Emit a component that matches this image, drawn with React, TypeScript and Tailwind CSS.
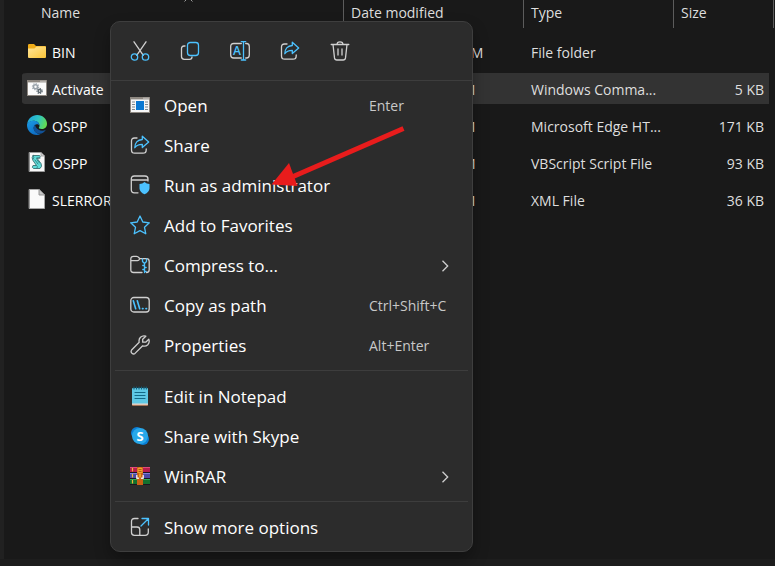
import type { ReactNode } from 'react';

const GREY = '#d0d0d0';
const BLUE = '#4cc2ff';

function Icon({ children }: { children: ReactNode }) {
  return (
    <svg width="20" height="20" viewBox="0 0 20 20" fill="none" strokeWidth="1.3" strokeLinecap="round" strokeLinejoin="round" className="block shrink-0" aria-hidden="true">
      {children}
    </svg>
  );
}

/* ---------- file icons ---------- */

const FolderIcon = () => (
  <Icon>
    <path d="M1 4.2Q1 3 2.200 3H7L9 5H18Q19 5 19 6V9H1Z" fill="#f0ac18" />
    <path d="M1 7.500H7.500L9.500 5.500H18Q19 5.500 19 6.500V16Q19 17 18 17H2Q1 17 1 16Z" fill="url(#folderFill)" />
    <defs>
      <linearGradient id="folderFill" x1="0" y1="0" x2="1" y2="1">
        <stop offset="0" stopColor="#ffe59a" />
        <stop offset="1" stopColor="#fbc537" />
      </linearGradient>
    </defs>
  </Icon>
);

const Gear = ({ x, y, r, color }: { x: number; y: number; r: number; color: string }) => (
  <g stroke={color}>
    <circle cx={x} cy={y} r={r} strokeWidth="1.5" />
    <circle cx={x} cy={y} r={r + 1.1} strokeWidth="1.1" strokeLinecap="butt" strokeDasharray="1.2 1.2" />
  </g>
);

const BatchIcon = () => (
  <Icon>
    <rect x="0.500" y="2.500" width="19" height="15" fill="#fbfbfb" stroke="#8d8780" strokeWidth="1" strokeLinejoin="miter" />
    <path d="M0 3.200H20" stroke="#8d8780" strokeWidth="2.400" strokeLinecap="butt" />
    <path d="M13.500 3.200h1M15.500 3.200h1M17.500 3.200h1" stroke="#fff" strokeWidth="1" strokeLinecap="butt" />
    <Gear x={8.5} y={8.7} r={2} color="#9aa3aa" />
    <Gear x={12.6} y={13} r={1.5} color="#5d6970" />
  </Icon>
);

const EdgeIcon = () => (
  <Icon>
    <defs>
      <linearGradient id="edgeTop" x1="0" y1="0.3" x2="1" y2="0.6">
        <stop offset="0" stopColor="#1fa4dd" />
        <stop offset="0.5" stopColor="#2fc5c4" />
        <stop offset="1" stopColor="#66dd4b" />
      </linearGradient>
      <linearGradient id="edgeSide" x1="0" y1="0" x2="0.6" y2="1">
        <stop offset="0" stopColor="#1b9be4" />
        <stop offset="1" stopColor="#0d6cc4" />
      </linearGradient>
    </defs>
    <path d="M0.200 9C1 3.500 5 0 10.200 0C16 0 20 4.300 20 8.700C20 12 17.600 14 14.700 14C12.500 14 11.500 13.200 11.900 12.500C13.300 10.900 12.500 6.500 8 5.900C4.500 5.500 1.500 7 0.200 9Z" fill="url(#edgeTop)" />
    <path d="M0 10C0.200 7.200 3.500 5.600 7 5.800C10.600 6 12.600 8.500 12.300 10.500C11.500 8.500 7 8.500 6.700 12.500C6.500 16 9.500 19 13.500 18.900C12.300 19.600 11.100 20 9.800 20C4.200 20 0 15.600 0 10Z" fill="url(#edgeSide)" />
    <path d="M8 9.400C6 11.100 6 15.500 9.300 17.700C12.500 19.800 16.400 18.800 18.900 14.800C16.500 16 13.500 16 11.300 14.400C9.300 13 8.200 11.200 8 9.400Z" fill="#115297" />
  </Icon>
);

const ScriptIcon = () => (
  <Icon>
    <path d="M2.500 0.500H14L17.500 4V19.500H2.500Z" fill="#f8f8f8" stroke="#9a9a9a" strokeWidth="1" />
    <path d="M14 0.500V4H17.500" fill="#cfcfcf" stroke="#9a9a9a" strokeWidth="0.800" />
    <path d="M6.200 3.500H12.500Q14 4.500 12.500 6H9.800L14 11.500Q15.500 14.500 13 16.500H6.500Q4.500 15.500 6 13.500H9.500L6 8.500Q4 5.500 6.200 3.500Z" fill="#5fdcd8" stroke="#3a6f72" strokeWidth="0.900" />
    <path d="M6 3.800Q7.800 5 6.500 6.800M9.500 6.200H13M9.500 13.500Q11.500 14.500 10 16.200M8 8L11 12M10 7.800L12.500 11" stroke="#2f7478" strokeWidth="0.800" />
  </Icon>
);

const PageIcon = () => (
  <Icon>
    <path d="M2.500 0.500H12L17.500 6V19.500H2.500Z" fill="#fafafa" stroke="#a6a6a6" strokeWidth="1" />
    <path d="M12 0.500V6H17.500Z" fill="#c9c9c9" stroke="#8f8f8f" strokeWidth="0.900" />
  </Icon>
);

/* ---------- menu icons ---------- */

const CutIcon = () => (
  <Icon>
    <path d="M4 0.800L13.300 14.300M16 0.800L6.700 14.300" stroke={GREY} />
    <circle cx="4.500" cy="16" r="3.200" stroke={BLUE} />
    <circle cx="15.500" cy="16" r="3.200" stroke={BLUE} />
  </Icon>
);

const CopyIcon = () => (
  <Icon>
    <path d="M5 5H4Q1.500 5 1.500 7.500V15.500Q1.500 18.300 4.300 18.300H9.500Q12 18.300 12 16" stroke={GREY} />
    <rect x="7.500" y="1.500" width="11" height="13" rx="2.800" stroke={BLUE} />
  </Icon>
);

const RenameIcon = () => (
  <Icon>
    <path d="M11.300 2.500H3.700Q0.700 2.500 0.700 5.500V14Q0.700 17 3.700 17H11.300M15.700 2.500H16.500Q19.300 2.500 19.300 5.500V14Q19.300 17 16.500 17H15.700" stroke={GREY} />
    <path d="M11.300 0.700H15.700M11.300 19H15.700M13.500 0.700V19" stroke={BLUE} />
    <text x="7" y="14" textAnchor="middle" fill={BLUE} className="font-['Open_Sans',sans-serif] text-[12px] font-semibold">A</text>
  </Icon>
);

const ShareIcon = () => (
  <Icon>
    <path d="M7 3H4.500Q1.500 3 1.500 6V15Q1.500 18.200 4.700 18.200H13Q16.200 18.200 16.200 15V14" stroke={GREY} />
    <path d="M12.300 1.200L18.700 7L12.300 12.500V9.300C9 9.300 6.500 10 4.800 12.700C4.800 8.200 7.500 4.800 12.300 4.500Z" stroke={BLUE} />
  </Icon>
);

const DeleteIcon = () => (
  <Icon>
    <path d="M1.200 3.500H18.800M7 3.500Q7 0.800 10 0.800Q13 0.800 13 3.500M3 3.500L4.500 16.900Q4.800 19 6.900 19H13.100Q15.200 19 15.500 16.900L17 3.500M8 8V14M12 8V14" stroke={GREY} />
  </Icon>
);

const OpenIcon = () => (
  <Icon>
    <rect x="0.500" y="2.500" width="19" height="15" fill="#f6f6f6" stroke="#8d8780" strokeWidth="1" strokeLinejoin="miter" />
    <path d="M0 3.200H20" stroke="#8d8780" strokeWidth="2.400" strokeLinecap="butt" />
    <path d="M13.500 3.200h1M15.500 3.200h1M17.500 3.200h1" stroke="#fff" strokeWidth="1" strokeLinecap="butt" />
    <path d="M2 7H5M2 9.500H5M2 12H5M2 14.500H5M15 7H18M15 9.500H18M15 12H18M15 14.500H18" stroke="#7e878d" strokeWidth="1" strokeLinecap="butt" />
    <rect x="6" y="6" width="8" height="9" fill="#0a78d2" />
  </Icon>
);

const AdminIcon = () => (
  <Icon>
    <path d="M8 17.800H4.300Q1.300 17.800 1.300 14.800V4Q1.300 1 4.300 1H15Q18 1 18 4V6M1.300 5H18" stroke={GREY} />
    <path d="M14.500 7Q16.500 8.800 19.500 9V13.500Q19.200 17.300 14.500 19.300Q9.800 17.300 9.500 13.500V9Q12.500 8.800 14.500 7Z" fill={BLUE} />
  </Icon>
);

const StarIcon = () => (
  <Icon>
    <path d="M10 1L12.800 7L19.300 7.800L14.500 12.300L15.800 18.800L10 15.600L4.200 18.800L5.500 12.300L0.700 7.800L7.200 7Z" stroke={BLUE} />
  </Icon>
);

const CompressIcon = () => (
  <Icon>
    <path d="M12 17.500H3.500Q0.800 17.500 0.800 14.800V4Q0.800 1.300 3.500 1.300H6.500Q8 1.300 9 2.800L9.800 3.700H16.500Q19.200 3.700 19.200 6.500V14.800Q19.200 17.500 16.500 17.500M0.800 5.700H7.500Q8.800 5.700 9.800 3.700" stroke={GREY} />
    <path d="M12.500 4V6.500L14.500 8.500L16.500 6.500V4M14.500 8.500V17.500M14.500 10.500H12.800M14.500 12.500H16.200M14.500 14.500H12.800M14.500 16.500H16.200" stroke={BLUE} />
  </Icon>
);

const PathIcon = () => (
  <Icon>
    <rect x="0.800" y="2.500" width="18.400" height="14.500" rx="3" stroke={GREY} />
    <path d="M3.300 5.800L5.700 13.700M7.300 5.800L9.700 13.700" stroke={BLUE} strokeWidth="1.600" />
    <path d="M12.500 13.600H13M16 13.600H16.500" stroke={BLUE} strokeWidth="1.700" />
  </Icon>
);

const WrenchIcon = () => (
  <Icon>
    <path d="M15.800 1.200L12.700 4.300V7.200H15.700L18.800 4.200Q20 7.300 17.800 9.700Q15.600 11.700 12.700 10.800L5 18.400Q3.600 19.600 2 18.300Q0.400 16.700 1.600 15L9.200 7.300Q8.500 4.300 10.500 2.300Q12.800 0.200 15.800 1.200Z" stroke={GREY} />
  </Icon>
);

const NotepadIcon = () => (
  <Icon>
    <rect x="2" y="2" width="16" height="17" rx="1" fill="#5ec8e5" />
    <path d="M2 17.500H18V18.500Q18 19.500 17 19.500H3Q2 19.500 2 18.500Z" fill="#e6d9cf" />
    <path d="M2 19.300H18" stroke="#b9683a" strokeWidth="0.700" strokeLinecap="butt" />
    <path d="M4 1V3M6.500 1V3M9 1V3M11.500 1V3M14 1V3M16.300 1V3" stroke="#12607c" strokeWidth="1.200" />
    <path d="M5 6.500H15M5 9.500H15M5 12.500H15" stroke="#136a88" strokeWidth="1.200" />
  </Icon>
);

const SkypeIcon = () => (
  <Icon>
    <circle cx="7" cy="7" r="6" fill="#0a7fd6" />
    <circle cx="13" cy="13" r="6" fill="#0a7fd6" />
    <circle cx="10" cy="10" r="8" fill="#28a8ea" />
    <text x="10" y="14.500" textAnchor="middle" fill="#fff" className="font-['Open_Sans',sans-serif] text-[13px] font-bold">S</text>
  </Icon>
);

const WinrarIcon = () => (
  <Icon>
    <rect x="0" y="1" width="20" height="6" fill="#b51d4c" />
    <path d="M0 1.500H20" stroke="#e04a7a" strokeWidth="1" strokeLinecap="butt" />
    <rect x="0" y="7" width="20" height="6" fill="#4a4aa6" />
    <path d="M0 7.500H20" stroke="#8080d8" strokeWidth="1" strokeLinecap="butt" />
    <rect x="0" y="13" width="20" height="6" fill="#12702e" />
    <path d="M0 13.500H20" stroke="#35a853" strokeWidth="1" strokeLinecap="butt" />
    <path d="M0 6.500H20M0 12.500H20M0 18.500H20" stroke="#1c1420" strokeWidth="1" strokeLinecap="butt" />
    <path d="M2.500 2V5.500M2.500 8V11.500M2.500 14V17.500" stroke="#f0b63a" strokeWidth="1.200" strokeLinecap="butt" />
    <rect x="7" y="1" width="6" height="18" fill="#c85f14" />
    <path d="M7.500 2.500Q10 0.500 12.500 2.500V7H7.500Z" fill="#f0a02c" />
    <path d="M8.500 3.500H11.500M8.500 5.500H11.500" stroke="#a65310" strokeWidth="0.900" strokeLinecap="butt" />
    <path d="M6.800 9.500V12.300H8.500M13.200 9.500V12.300H11.500" stroke="#f1eee9" strokeWidth="1.400" />
    <rect x="9" y="7.500" width="2" height="4" fill="#e8a02a" />
  </Icon>
);

const MoreIcon = () => (
  <Icon>
    <path d="M8 1.500H4.500Q1.500 1.500 1.500 4.500V15.500Q1.500 18.300 4.300 18.300H15Q18.300 18.300 18.300 15.300V12M1.500 10H7Q9.800 10 9.800 12.800V18.300" stroke={GREY} />
    <path d="M11 9L18.300 1.700M12 1.500H18.500V8" stroke={BLUE} />
  </Icon>
);

const Chevron = () => (
  <svg width="8" height="12" viewBox="0 0 8 12" fill="none" className="block" aria-hidden="true">
    <path d="M1.500 0.800L6.700 6L1.500 11.200" stroke="#cfcfcf" strokeWidth="1.300" />
  </svg>
);

/* ---------- data ---------- */

type FileRow = { name: string; date: string; type: string; size: string; icon: ReactNode; selected?: boolean };

const files: FileRow[] = [
  { name: 'BIN', date: '3/14/2023 10:31 PM', type: 'File folder', size: '', icon: <FolderIcon /> },
  { name: 'Activate', date: '3/14/2023 9:26 PM', type: 'Windows Comma...', size: '5 KB', icon: <BatchIcon />, selected: true },
  { name: 'OSPP', date: '3/14/2023 9:26 PM', type: 'Microsoft Edge HT...', size: '171 KB', icon: <EdgeIcon /> },
  { name: 'OSPP', date: '3/14/2023 9:26 AM', type: 'VBScript Script File', size: '93 KB', icon: <ScriptIcon /> },
  { name: 'SLERROR', date: '3/14/2023 9:26 PM', type: 'XML File', size: '36 KB', icon: <PageIcon /> },
];

const actions = [
  { label: 'Cut', icon: <CutIcon /> },
  { label: 'Copy', icon: <CopyIcon /> },
  { label: 'Rename', icon: <RenameIcon /> },
  { label: 'Share', icon: <ShareIcon /> },
  { label: 'Delete', icon: <DeleteIcon /> },
];

type Item = { label: string; icon: ReactNode; shortcut?: string; submenu?: boolean };

const groups: Item[][] = [
  [
    { label: 'Open', icon: <OpenIcon />, shortcut: 'Enter' },
    { label: 'Share', icon: <ShareIcon /> },
    { label: 'Run as administrator', icon: <AdminIcon /> },
    { label: 'Add to Favorites', icon: <StarIcon /> },
    { label: 'Compress to...', icon: <CompressIcon />, submenu: true },
    { label: 'Copy as path', icon: <PathIcon />, shortcut: 'Ctrl+Shift+C' },
    { label: 'Properties', icon: <WrenchIcon />, shortcut: 'Alt+Enter' },
  ],
  [
    { label: 'Edit in Notepad', icon: <NotepadIcon /> },
    { label: 'Share with Skype', icon: <SkypeIcon /> },
    { label: 'WinRAR', icon: <WinrarIcon />, submenu: true },
  ],
  [{ label: 'Show more options', icon: <MoreIcon /> }],
];

/* ---------- parts ---------- */

function HeaderCell({ label, first }: { label: string; first?: boolean }) {
  return (
    <th scope="col" className="h-[33px] p-0 align-top font-normal">
      <div className={`relative h-7 border-r border-[#5c5c5c] pt-[3px] leading-5 ${first ? 'pl-[19px]' : 'pl-[7px]'}`}>
        {label}
        {first && (
          <svg width="9" height="5" viewBox="0 0 9 5" fill="none" className="absolute -top-[3px] left-[162px]" aria-hidden="true">
            <path d="M0.500 4.500L4.500 0.500L8.500 4.500" stroke="#9a9a9a" />
          </svg>
        )}
      </div>
    </th>
  );
}

function FileTable() {
  return (
    <table className="w-full table-fixed border-separate border-spacing-0 text-left text-[14px] leading-5 text-[#dedede]">
      <colgroup>
        <col />
        <col className="w-[180px]" />
        <col className="w-[150px]" />
        <col className="w-[100px]" />
      </colgroup>
      <thead>
        <tr>
          <HeaderCell label="Name" first />
          <HeaderCell label="Date modified" />
          <HeaderCell label="Type" />
          <HeaderCell label="Size" />
        </tr>
      </thead>
      <tbody>
        {files.map((f, i) => {
          const cell = `h-[37px] whitespace-nowrap border-y-[3px] border-transparent bg-clip-padding pb-0 pt-0.5 ${f.selected ? 'bg-[#333333]' : ''}`;
          return (
            <tr key={i}>
              <td className={`${cell} rounded-l-[5px] pl-[5px] text-white`}>
                <span className="flex items-center gap-[5px]">
                  <span className="pb-1">{f.icon}</span>
                  {f.name}
                </span>
              </td>
              <td className={`${cell} pl-[9px]`}>{f.date}</td>
              <td className={`${cell} pl-[7px]`}>{f.type}</td>
              <td className={`${cell} rounded-r-[5px] border-r-[5px] pr-[5px] text-right`}>{f.size}</td>
            </tr>
          );
        })}
      </tbody>
    </table>
  );
}

function MenuItem({ item }: { item: Item }) {
  return (
    <li>
      <button type="button" className="flex h-10 w-full items-center pl-[19px] text-left text-white">
        {item.icon}
        <span className="ml-[14px] flex-1 whitespace-nowrap pt-0.5 text-[17px] leading-6">{item.label}</span>
        {item.shortcut && <span className="w-[103px] whitespace-nowrap pt-0.5 text-[14px] leading-6 text-[#c8c8c8]">{item.shortcut}</span>}
        {item.submenu && (
          <span className="pr-[23px] pt-0.5">
            <Chevron />
          </span>
        )}
      </button>
    </li>
  );
}

function ContextMenu() {
  return (
    <div className="absolute left-[110px] top-[21px] w-[363px] rounded-[10px] border border-[#3e3e3e] bg-[#2c2c2c] shadow-[0_8px_16px_rgba(0,0,0,0.3)]">
      <div className="flex h-[58px] items-center gap-[30px] pl-[19px]">
        {actions.map((a) => (
          <button key={a.label} type="button" aria-label={a.label}>
            {a.icon}
          </button>
        ))}
      </div>
      <div className="border-t border-[#3d3d3d] py-1">
        {groups.map((group, i) => (
          <div key={i}>
            {i > 0 && <hr className="mx-1 my-[5px] border-[#3d3d3d]" />}
            <ul>
              {group.map((item) => (
                <MenuItem key={item.label} item={item} />
              ))}
            </ul>
          </div>
        ))}
      </div>
    </div>
  );
}

function PointerArrow() {
  return (
    <svg width="136" height="64" viewBox="0 0 136 64" className="pointer-events-none absolute left-[270px] top-[124px]" aria-hidden="true">
      <path d="M22 53L133.500 4.500" stroke="#e81c1c" strokeWidth="5" />
      <path d="M1.500 60.500L19 39L27.500 62Z" fill="#e81c1c" />
    </svg>
  );
}

export default function App() {
  return (
    <div className="relative flex min-h-screen flex-col overflow-hidden bg-[#191919] font-['Open_Sans','Noto_Sans',sans-serif]">
      <main className="flex-1 border-l-4 border-[#212121] pl-[18px] pr-px">
        <FileTable />
      </main>
      <footer className="h-[7px] bg-[#1d1d1d]" />
      <ContextMenu />
      <PointerArrow />
    </div>
  );
}
